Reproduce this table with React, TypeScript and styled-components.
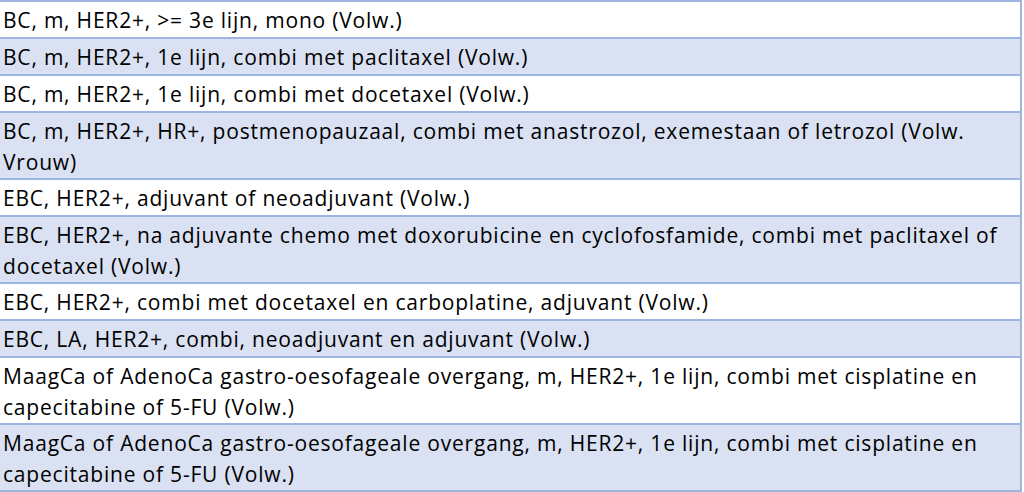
import React from "react";
import styled, { createGlobalStyle } from "styled-components";

const GlobalStyle = createGlobalStyle`
  html, body {
    margin: 0;
    padding: 0;
    background: #ffffff;
  }
  body {
    width: 1024px;
    height: 492px;
    overflow: hidden;
  }
`;

const Table = styled.div`
  display: flex;
  flex-direction: column;
  width: 1024px;
  margin-left: -2px;
  box-sizing: border-box;
  border-top: 2px solid #9db5e0;
`;

const Row = styled.div<{ $shaded: boolean; $lines: number }>`
  box-sizing: border-box;
  height: ${(p) => p.$lines * 30 + 7}px;
  padding: 3px 4px 0 3px;
  width: 1024px;
  background: ${(p) => (p.$shaded ? "#d9e1f2" : "#ffffff")};
  border-bottom: 2px solid #9db5e0;
  border-right: 2px solid #9db5e0;
  border-left: 2px solid #9db5e0;
  overflow: hidden;
`;

const Line = styled.span`
  display: block;
  white-space: nowrap;
  font-family: "Open Sans", Lato, sans-serif;
  font-size: 21px;
  letter-spacing: 0.8px;
  line-height: 31px;
  color: #000000;
`;

const rows: string[][] = [
  ["BC, m, HER2+, >= 3e lijn, mono (Volw.)"],
  ["BC, m, HER2+, 1e lijn, combi met paclitaxel (Volw.)"],
  ["BC, m, HER2+, 1e lijn, combi met docetaxel (Volw.)"],
  [
    "BC, m, HER2+, HR+, postmenopauzaal, combi met anastrozol, exemestaan of letrozol (Volw.",
    "Vrouw)",
  ],
  ["EBC, HER2+, adjuvant of neoadjuvant (Volw.)"],
  [
    "EBC, HER2+, na adjuvante chemo met doxorubicine en cyclofosfamide, combi met paclitaxel of",
    "docetaxel (Volw.)",
  ],
  ["EBC, HER2+, combi met docetaxel en carboplatine, adjuvant (Volw.)"],
  ["EBC, LA, HER2+, combi, neoadjuvant en adjuvant (Volw.)"],
  [
    "MaagCa of AdenoCa gastro-oesofageale overgang, m, HER2+, 1e lijn, combi met cisplatine en",
    "capecitabine of 5-FU (Volw.)",
  ],
  [
    "MaagCa of AdenoCa gastro-oesofageale overgang, m, HER2+, 1e lijn, combi met cisplatine en",
    "capecitabine of 5-FU (Volw.)",
  ],
];

export default function App() {
  return (
    <>
      <GlobalStyle />
      <Table>
        {rows.map((lines, i) => (
          <Row key={i} $shaded={i % 2 === 1} $lines={lines.length}>
            {lines.map((t, j) => (
              <Line key={j}>{t}</Line>
            ))}
          </Row>
        ))}
      </Table>
    </>
  );
}
